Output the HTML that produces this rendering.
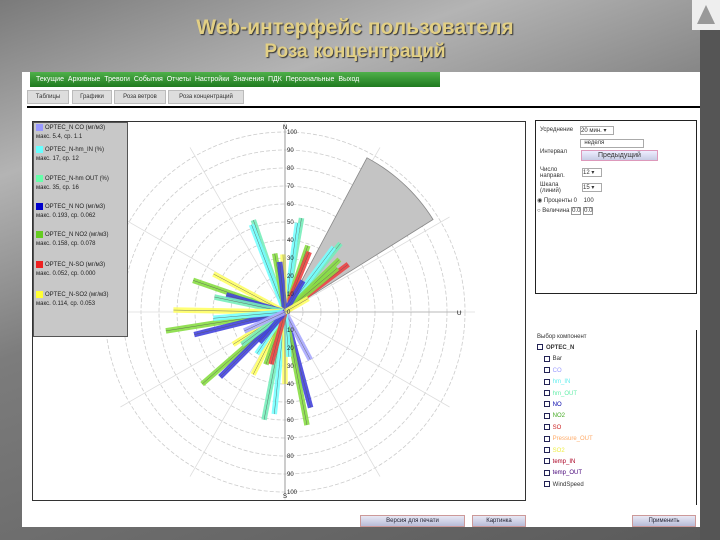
<!DOCTYPE html>
<html><head><meta charset="utf-8"><style>
*{margin:0;padding:0;box-sizing:border-box}
body{width:720px;height:540px;overflow:hidden;position:relative;font-family:"Liberation Sans","DejaVu Sans",sans-serif;background:linear-gradient(160deg,#7a7a7a 0%,#b4b4b4 22%,#7c7c7c 45%,#5a5a5a 100%)}
.t{position:absolute;left:0;width:710px;text-align:center;color:#e2cf84;font-weight:bold;text-shadow:1px 1px 1px #333}
.strip{position:absolute;left:700px;top:0;width:20px;height:540px;background:#555}
.tri{position:absolute;left:692px;top:0;width:28px;height:30px;background:#eee}
.panel{position:absolute;left:22px;top:72px;width:678px;height:455px;background:#fff}
.nav{position:absolute;left:30px;top:72px;width:410px;height:15px;background:linear-gradient(#4fb04a,#1f7a1f);color:#fff;font-size:7px;line-height:15px;padding-left:6px;white-space:nowrap;word-spacing:2px}
.tab{position:absolute;top:90px;height:14px;background:#ddd;border:1px solid #bbb;font-size:6px;color:#333;line-height:12px;text-align:center}
.bl{position:absolute;left:27px;top:106px;width:673px;height:2px;background:#000}
.box{position:absolute;border:1px solid #222;background:#fff}
.leg{position:absolute;left:33px;top:122px;width:95px;height:215px;background:#c8c8c8;border:1px solid #555;font-size:6px;color:#222}
.leg div{position:absolute;left:2px;white-space:nowrap}
.sw{display:inline-block;width:7px;height:7px;vertical-align:middle;margin-right:2px}
.rt{font-size:6px;color:#333;position:absolute;white-space:nowrap}
.btn{position:absolute;top:515px;height:12px;background:linear-gradient(#e8e8f4,#b8bcd8);border:1px solid #c99;font-size:6px;text-align:center;line-height:11px;color:#223}
.cb{display:inline-block;width:6px;height:6px;border:1px solid #225;margin-right:3px;vertical-align:middle}
</style></head><body>
<div class="t" style="top:16px;font-size:21px">Web-интерфейс пользователя</div>
<div class="t" style="top:41px;font-size:19px">Роза концентраций</div>
<div class="strip"></div>
<div class="tri"><svg width="28" height="30"><polygon points="14,5 23,24 5,24" fill="#999"/></svg></div>
<div class="panel"></div>
<div class="nav">Текущие Архивные Тревоги События Отчеты Настройки Значения ПДК Персональные Выход</div>
<div class="tab" style="left:27px;width:42px">Таблицы</div>
<div class="tab" style="left:72px;width:40px">Графики</div>
<div class="tab" style="left:114px;width:52px">Роза ветров</div>
<div class="tab" style="left:168px;width:76px">Роза концентраций</div>
<div class="bl"></div>
<div class="box" style="left:32px;top:121px;width:494px;height:380px;border-color:#333"></div>
<svg style="position:absolute;left:33px;top:122px" width="492" height="378" viewBox="33 122 492 378">
<g id="grid" fill="none" stroke="#ccc" stroke-width="0.8" stroke-dasharray="4,2"></g>
<g id="bars"></g>
<line x1="285" y1="128" x2="285" y2="494" stroke="#888" stroke-width="0.8"/>
<line x1="285" y1="312" x2="462" y2="312" stroke="#aaa" stroke-width="0.8"/>
<g id="lbl" font-size="6" fill="#222" font-family="Liberation Sans"></g>
<text x="283" y="129" font-size="6">N</text><text x="457" y="315" font-size="6">U</text><text x="283" y="498" font-size="6">S</text>
</svg>
<div class="leg">
<div style="top:1px"><span class="sw" style="background:#99f"></span>OPTEC_N CO (мг/м3)</div>
<div style="top:11px">макс. 5.4, ср. 1.1</div>
<div style="top:23px"><span class="sw" style="background:#6ff"></span>OPTEC_N-hm_IN (%)</div>
<div style="top:33px">макс. 17, ср. 12</div>
<div style="top:52px"><span class="sw" style="background:#6fa"></span>OPTEC_N-hm OUT (%)</div>
<div style="top:62px">макс. 35, ср. 16</div>
<div style="top:80px"><span class="sw" style="background:#00c"></span>OPTEC_N NO (мг/м3)</div>
<div style="top:90px">макс. 0.193, ср. 0.062</div>
<div style="top:108px"><span class="sw" style="background:#6c2"></span>OPTEC_N NO2 (мг/м3)</div>
<div style="top:118px">макс. 0.158, ср. 0.078</div>
<div style="top:138px"><span class="sw" style="background:#e22"></span>OPTEC_N-SO (мг/м3)</div>
<div style="top:148px">макс. 0.052, ср. 0.000</div>
<div style="top:168px"><span class="sw" style="background:#ff3"></span>OPTEC_N-SO2 (мг/м3)</div>
<div style="top:178px">макс. 0.114, ср. 0.053</div>
</div>
<div class="box" style="left:535px;top:120px;width:162px;height:174px"></div>
<div class="rt" style="left:540px;top:127px">Усреднение</div>
<div class="rt" style="left:580px;top:126px;border:1px solid #aaa;width:34px;height:9px;background:#fff">20 мин. ▾</div>
<div class="rt" style="left:580px;top:139px;border:1px solid #aaa;width:64px;height:9px;background:#fff">&nbsp;&nbsp;неделя</div>
<div class="rt" style="left:540px;top:149px">Интервал</div>
<div class="rt" style="left:581px;top:150px;width:77px;height:11px;background:linear-gradient(#eef,#c8cce4);border:1px solid #d9b;text-align:center;line-height:9px;font-size:7px">Предыдущий</div>
<div class="rt" style="left:540px;top:167px;line-height:6px">Число<br>направл.</div>
<div class="rt" style="left:582px;top:168px;border:1px solid #aaa;width:20px;height:9px">12 ▾</div>
<div class="rt" style="left:540px;top:182px;line-height:6px">Шкала<br>(линий)</div>
<div class="rt" style="left:582px;top:183px;border:1px solid #aaa;width:20px;height:9px">15 ▾</div>
<div class="rt" style="left:537px;top:197px">◉ Проценты 0 &nbsp;&nbsp;&nbsp;100</div>
<div class="rt" style="left:537px;top:208px">○ Величина <span style="border:1px solid #999">0.0</span> <span style="border:1px solid #999">0.0</span></div>
<div class="box" style="left:535px;top:330px;width:162px;height:175px;border-left:none;border-top:none;border-bottom:none"></div>
<div class="rt" style="left:537px;top:334px">Выбор компонент</div>
<div class="rt" style="left:537px;top:343px;line-height:11.4px;font-size:6px">
<span class="cb"></span><b>OPTEC_N</b><br>
&nbsp;&nbsp;&nbsp;&nbsp;<span class="cb"></span>Bar<br>
&nbsp;&nbsp;&nbsp;&nbsp;<span class="cb"></span><span style="color:#99f">CO</span><br>
&nbsp;&nbsp;&nbsp;&nbsp;<span class="cb"></span><span style="color:#6ee">hm_IN</span><br>
&nbsp;&nbsp;&nbsp;&nbsp;<span class="cb"></span><span style="color:#6ea">hm_OUT</span><br>
&nbsp;&nbsp;&nbsp;&nbsp;<span class="cb"></span><span style="color:#00a">NO</span><br>
&nbsp;&nbsp;&nbsp;&nbsp;<span class="cb"></span><span style="color:#4a2">NO2</span><br>
&nbsp;&nbsp;&nbsp;&nbsp;<span class="cb"></span><span style="color:#c22">SO</span><br>
&nbsp;&nbsp;&nbsp;&nbsp;<span class="cb"></span><span style="color:#fa6">Pressure_OUT</span><br>
&nbsp;&nbsp;&nbsp;&nbsp;<span class="cb"></span><span style="color:#ee4">SO2</span><br>
&nbsp;&nbsp;&nbsp;&nbsp;<span class="cb"></span><span style="color:#a02">temp_IN</span><br>
&nbsp;&nbsp;&nbsp;&nbsp;<span class="cb"></span><span style="color:#407">temp_OUT</span><br>
&nbsp;&nbsp;&nbsp;&nbsp;<span class="cb"></span>WindSpeed</div>
<div class="btn" style="left:360px;width:105px">Версия для печати</div>
<div class="btn" style="left:472px;width:54px">Картинка</div>
<div class="btn" style="left:632px;width:64px">Применить</div>
<script>
var cx=285,cy=312,R=180,ns="http://www.w3.org/2000/svg";
function el(p,t,a){var e=document.createElementNS(ns,t);for(var k in a)e.setAttribute(k,a[k]);document.getElementById(p).appendChild(e);return e}
for(var i=1;i<=10;i++)el("grid","circle",{cx:cx,cy:cy,r:i*18});
for(var a=0;a<360;a+=30){var r=a*Math.PI/180;el("grid","line",{x1:cx,y1:cy,x2:cx+190*Math.sin(r),y2:cy-190*Math.cos(r),"stroke-dasharray":"none",stroke:"#ddd"})}
for(var i=0;i<=10;i++){el("lbl","text",{x:cx+2,y:cy-i*18+2}).textContent=i*10;if(i)el("lbl","text",{x:cx+2,y:cy+i*18+2}).textContent=i*10}
function P(d,u){var r=d*Math.PI/180;return [cx+u*1.8*Math.sin(r),cy-u*1.8*Math.cos(r)]}
var w=[];for(var d=28;d<=58;d+=2){var p=P(d,97);w.push(p.join(","))}
el("bars","polygon",{points:cx+","+cy+" "+w.join(" "),fill:"#c4c4c4",stroke:"#888","stroke-width":"0.8"});
var C={c:"#7ff",g:"#8d4",y:"#ff6",b:"#44d",r:"#e44",m:"#7eb",l:"#aaf"};
var B=[[341,54,"m"],[339,52,"c"],[10,53,"m"],[8,50,"c"],[19,39,"g"],[22,36,"r"],[358,32,"y"],[350,33,"g"],[354,28,"b"],[39,49,"m"],[37,45,"c"],[46,42,"g"],[53,44,"r"],[50,38,"g"],[289,54,"g"],[298,45,"y"],[286,34,"b"],[282,40,"m"],[271,62,"y"],[261,67,"g"],[256,52,"b"],[265,40,"c"],[229,61,"g"],[225,51,"b"],[238,34,"y"],[233,30,"m"],[207,39,"y"],[200,31,"g"],[214,28,"c"],[191,61,"m"],[186,57,"c"],[180,40,"y"],[165,55,"b"],[169,64,"g"],[152,30,"l"],[175,25,"c"],[195,30,"r"],[220,22,"b"],[245,25,"l"],[30,20,"b"],[60,15,"y"]];
B.forEach(function(b){var p=P(b[0],b[1]);el("bars","line",{x1:cx,y1:cy,x2:p[0],y2:p[1],stroke:C[b[2]],"stroke-width":5.5,opacity:0.9});el("bars","line",{x1:cx,y1:cy,x2:p[0],y2:p[1],stroke:"#555","stroke-width":0.4})});
</script>
</body></html>
